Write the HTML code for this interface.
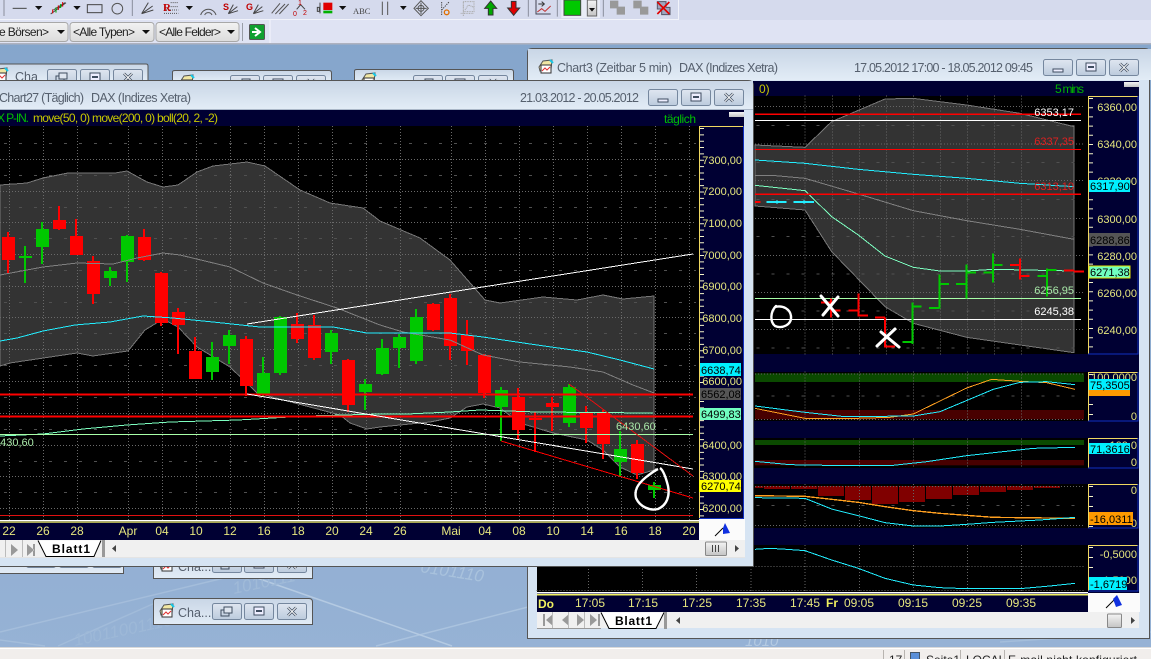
<!DOCTYPE html>
<html><head><meta charset="utf-8"><title>Chart</title>
<style>
html,body{margin:0;padding:0;background:#8aa9cd;width:1151px;height:659px;overflow:hidden}
svg{display:block}
text{font-family:"Liberation Sans",sans-serif;font-size:12px}
.ax{fill:#e6e67e;font-size:11px;text-anchor:end}
.tx{fill:#e6e67e;font-size:12px;text-anchor:middle}
.tag{fill:#000;font-size:11px}
.ttl{fill:#56606e;font-size:12.5px}
.cb{fill:#222;font-size:12px}
.tab{fill:#000;font-size:12px;font-weight:bold}
.st{fill:#222;font-size:12px}
.c{fill:none;shape-rendering:crispEdges}
</style></head><body>
<svg xmlns="http://www.w3.org/2000/svg" width="1151" height="659" viewBox="0 0 1151 659">
<defs>
<linearGradient id="dk" x1="0" y1="0" x2="0" y2="1"><stop offset="0" stop-color="#84a5cb"/><stop offset="1" stop-color="#96b2d5"/></linearGradient>
<linearGradient id="tg" x1="0" y1="0" x2="0" y2="1"><stop offset="0" stop-color="#c9d6e6"/><stop offset="1" stop-color="#e2ecf6"/></linearGradient>
<linearGradient id="bg" x1="0" y1="0" x2="0" y2="1"><stop offset="0" stop-color="#dfe6f0"/><stop offset="1" stop-color="#bccbdd"/></linearGradient>
<linearGradient id="cbg" x1="0" y1="0" x2="0" y2="1"><stop offset="0" stop-color="#f2f2f2"/><stop offset="1" stop-color="#dcdcdc"/></linearGradient>
<linearGradient id="wb" x1="0" y1="0" x2="0" y2="1"><stop offset="0" stop-color="#f4f4f4"/><stop offset="1" stop-color="#c4c4c4"/></linearGradient>
<g id="bRest"><rect x=".5" y=".5" width="29" height="16" rx="2" fill="url(#bg)" stroke="#75879e"/><rect x="9" y="7" width="8" height="6" fill="none" stroke="#3f4d60"/><rect x="12" y="4" width="8" height="6" fill="#dfe6f0" stroke="#3f4d60"/></g>
<g id="bMin"><rect x=".5" y=".5" width="29" height="16" rx="2" fill="url(#bg)" stroke="#75879e"/><rect x="10" y="10" width="10" height="3" fill="#eef" stroke="#3f4d60"/></g>
<g id="bMax"><rect x=".5" y=".5" width="29" height="16" rx="2" fill="url(#bg)" stroke="#75879e"/><rect x="10" y="4" width="10" height="8" fill="#eef" stroke="#3f4d60"/><rect x="12" y="7" width="6" height="2" fill="#3f4d60"/></g>
<g id="bX"><rect x=".5" y=".5" width="29" height="16" rx="2" fill="url(#bg)" stroke="#75879e"/><path d="M11 4.500L19 12.500M19 4.500L11 12.500" stroke="#3f4d60" stroke-width="2.600"/><path d="M11 4.500L19 12.500M19 4.500L11 12.500" stroke="#fff" stroke-width="1"/></g>
<g id="ico"><path d="M2 8L6 2L15 1L14 10L3 12z" fill="#f1e7a4" stroke="#555"/><rect x="4" y="6" width="10" height="8" fill="#fff" stroke="#333"/><path d="M5 12L8 9L10 11L13 8" stroke="#e03030" fill="none"/><path d="M13 1l3 3" stroke="#19c6e6" stroke-width="2"/></g>
</defs>

<!-- desktop -->
<rect width="1151" height="659" fill="url(#dk)"/>
<g fill="none" stroke="#b4cae2" stroke-width="1.500">
<path d="M257 578L452 646"/><path d="M376 646L528 607" opacity=".7"/><path d="M0 632L224 578" opacity=".5"/><path d="M58 646L155 603" opacity=".4"/><path d="M0 640L45 646" opacity=".5"/>
<path d="M1000 642L1151 632" opacity=".5"/>
</g>
<text x="420" y="572" transform="rotate(9 420 572)" style="font-size:17px;font-style:italic" fill="#a9c2dd">0101110</text>
<text x="234" y="594" transform="rotate(-12 234 594)" style="font-size:17px;font-style:italic" fill="#a0bad8">1010111</text>
<text x="75" y="646" transform="rotate(-12 75 646)" style="font-size:17px;font-style:italic" fill="#9db8d7">10011001110</text>
<text x="745" y="646" style="font-size:15px;font-style:italic" fill="#b4cae2">1010</text>

<!-- toolbars -->
<rect width="1151" height="20" fill="#d5daed"/>
<rect y="20" width="1151" height="23" fill="#dfe3f3"/>
<rect y="43" width="1151" height="1.500" fill="#aeb2bf"/>
<path d="M0 19.500H678.500V0" fill="none" stroke="#f1f3fa"/>
<g transform="scale(.33333)" stroke-width="3" fill="none">
<path d="M12 0V48M397 0V48" stroke="#8a8e9c"/>
<path d="M38 25H80" stroke="#444"/>
<path d="M105 18h22l-11 12zM220 18h22l-11 12zM557 18h22l-11 12zM1017 18h22l-11 12z" fill="#111"/>
<path d="M152 42L198 8M160 30l35-22" stroke="#444"/><path d="M158 28v12M175 16v14M188 6v14" stroke="#d00"/><path d="M168 22v16M182 12v12" stroke="#0a0"/>
<rect x="262" y="14" width="44" height="24" stroke="#444"/>
<circle cx="352" cy="26" r="16" stroke="#555"/>
<path d="M425 41L445 8M425 41L458 18M425 41L460 30" stroke="#444"/>
<path d="M512 8H535M512 20H535M492 30H535M492 40H535" stroke="#555" stroke-dasharray="3 3"/>
<path d="M602 45A24 24 0 0 1 648 45M614 45A12 12 0 0 1 636 45" stroke="#555"/>
<path d="M685 41L700 14M685 41L712 20M685 41L714 32" stroke="#444"/>
<path d="M760 41L775 14M760 41L787 20M760 41L790 32" stroke="#444"/>
<path d="M815 40L840 10M826 42L855 12M838 42L866 12" stroke="#555"/>
<path d="M890 28L902 14L915 28" stroke="#444"/>
<path d="M960 8V40M952 22h6v12h-6z" stroke="#444"/>
<rect x="970" y="8" width="27" height="22" fill="#e00000" stroke="none"/><rect x="970" y="32" width="27" height="8" fill="#00b000" stroke="none"/>
<path d="M1147 5V45M1163 5V45" stroke="#555"/>
</g>
<text x="163" y="11" style="font-family:'Liberation Serif',serif;font-size:11px;font-weight:bold" fill="#c00000">R</text>
<text x="223" y="10" style="font-size:9px;font-weight:bold" fill="#c00000">S</text>
<text x="246" y="10" style="font-size:9px;font-weight:bold" fill="#c00000">G</text>
<text x="298" y="5" style="font-size:7px" fill="#c00000">1</text>
<text x="293" y="16" style="font-size:7px" fill="#c00000">0</text>
<text x="303" y="15" style="font-size:7px" fill="#c00000">2</text>
<text x="353" y="14" style="font-family:'Liberation Serif',serif;font-size:8.500px" fill="#444">ABC</text>
<g transform="translate(400,0) scale(.33333)" stroke-width="3" fill="none">
<path d="M0 18h20l-10 12z" fill="#111"/>
<path d="M63 2L85 25L63 47L42 25z" stroke="#555"/><circle cx="63" cy="25" r="9" stroke="#555"/><path d="M63 8V42M47 25H80" stroke="#555"/>
<path d="M125 45V5M125 30L148 5" stroke="#444" stroke-dasharray="4 3"/><circle cx="140" cy="37" r="7" stroke="#e07000" stroke-width="4"/>
<path d="M190 5H222V35H190zM182 40H222M190 5V48M195 30L205 15L222 22" stroke="#aaa" stroke-dasharray="3 2"/>
<path d="M272 3L290 25H279V45H265V25H254z" fill="#00a800" stroke="#333"/>
<path d="M341 46L359 24H348V4H334V24H323z" fill="#e00000" stroke="#333"/>
<path d="M385 0V50M472 0V50M610 0V50" stroke="#8a8e9c"/>
<path d="M408 0V42H452" stroke="#445"/><path d="M412 36L425 26L435 34L452 18" stroke="#c03030"/><path d="M415 12H430M425 5L433 12L425 19" stroke="#333"/>
<rect x="484" y="0" width="116" height="54" fill="#e9ecf6"/>
<rect x="492" y="0" width="50" height="46" fill="#00c800" stroke="#444"/>
<rect x="562" y="0" width="28" height="48" fill="url(#wb)" stroke="#666"/><path d="M567 24h18l-9 11z" fill="#111"/>
<path d="M630 2H655V20H675V44H650V25H630z" fill="#999"/><path d="M700 2H725V20H745V44H720V25H700z" fill="#999"/>
<path d="M772 5H798V22H810V44H785V27H772z" fill="#9fa6c0" stroke="#556"/><path d="M772 6L808 42M808 6L772 42" stroke="#e00000" stroke-width="5"/>
</g>
<g>
<rect x="-6" y="22.500" width="74" height="19" rx="3" fill="url(#cbg)" stroke="#a8a8a8"/>
<text class="cb" x="-1" y="36" textLength="50">e Börsen&gt;</text><path d="M57 30h8l-4 4z" fill="#111"/>
<rect x="70" y="22.500" width="84" height="19" rx="3" fill="url(#cbg)" stroke="#a8a8a8"/>
<text class="cb" x="73" y="36" textLength="62">&lt;Alle Typen&gt;</text><path d="M142 30h8l-4 4z" fill="#111"/>
<rect x="156" y="22.500" width="83" height="19" rx="3" fill="url(#cbg)" stroke="#a8a8a8"/>
<text class="cb" x="159" y="36" textLength="62">&lt;Alle Felder&gt;</text><path d="M227 30h8l-4 4z" fill="#111"/>
<path d="M242.500 23V41" stroke="#9a9ea8"/>
<rect x="249.500" y="24.500" width="15" height="15" rx="1" fill="#10a030" stroke="#555"/>
<path d="M252 32H258M255 28L260 32L255 36" stroke="#fff" stroke-width="2" fill="none"/>
<path d="M270 20V43" stroke="#f5f6fc"/>
</g>

<!-- minimized windows -->
<g>
<path d="M-3 81V66Q-3 64 -1 64H146Q148 64 148 66V81z" fill="url(#tg)" stroke="#555"/>
<use href="#ico" x="-8" y="67"/>
<text class="ttl" x="15" y="81">Cha</text>
<use href="#bRest" x="47" y="69"/><use href="#bMax" x="80" y="69"/><use href="#bX" x="113" y="69"/>
<path d="M172.500 81V72Q172.500 70.500 175 70.500H329Q331.500 70.500 331.500 73V81z" fill="url(#tg)" stroke="#555"/>
<use href="#ico" x="178" y="74"/>
<use href="#bRest" x="230" y="75"/><use href="#bMax" x="263" y="75"/><use href="#bX" x="296" y="75"/>
<path d="M354.500 81V71Q354.500 69.500 357 69.500H511Q513.500 69.500 513.500 72V81z" fill="url(#tg)" stroke="#555"/>
<use href="#ico" x="360" y="72"/>
<use href="#bRest" x="413" y="75"/><use href="#bMax" x="445" y="75"/><use href="#bX" x="478" y="75"/>
<path d="M-3 550V573.500H123.500V550z" fill="url(#tg)" stroke="#555"/>
<use href="#bRest" x="26" y="551"/><use href="#bMax" x="59" y="551"/><use href="#bX" x="92" y="551"/>
<path d="M153.500 550V578.500H312.500V550z" fill="url(#tg)" stroke="#555"/>
<use href="#ico" x="158" y="557"/>
<text class="ttl" x="178" y="571">Cha...</text>
<use href="#bRest" x="212" y="556"/><use href="#bMax" x="244" y="556"/><use href="#bX" x="277" y="556"/>
<path d="M153.500 601Q153.500 598.500 156 598.500H309Q312.500 598.500 312.500 602V624.500H153.500z" fill="url(#tg)" stroke="#555"/>
<use href="#ico" x="158" y="603"/>
<text class="ttl" x="178" y="617">Cha...</text>
<use href="#bRest" x="212" y="603"/><use href="#bMax" x="244" y="603"/><use href="#bX" x="277" y="603"/>
</g>

<!-- Chart3 window -->
<path d="M527.500 638.500V53Q527.500 48.500 532 48.500H1145Q1149.500 48.500 1149.500 53V638.500z" fill="#d6e4f3" stroke="#555"/>
<rect x="528" y="49" width="1121" height="31" fill="url(#tg)"/>
<use href="#ico" x="537" y="59"/>
<text class="ttl" x="557" y="72" textLength="115">Chart3 (Zeitbar 5 min)</text>
<text class="ttl" x="679" y="72" textLength="99">DAX (Indizes Xetra)</text>
<text class="ttl" x="854" y="72" textLength="179">17.05.2012 17:00 - 18.05.2012 09:45</text>
<use href="#bMin" x="1043" y="59"/><use href="#bMax" x="1076" y="59"/><use href="#bX" x="1109" y="59"/>
<rect x="537" y="81" width="602" height="531" fill="#000033"/>
<rect x="537" y="96" width="551" height="258" fill="#000"/>
<rect x="537" y="372" width="551" height="49" fill="#000"/>
<rect x="537" y="438" width="551" height="30" fill="#000"/>
<rect x="537" y="484" width="551" height="44" fill="#000"/>
<rect x="537" y="545" width="551" height="48" fill="#000"/>
<text x="759" y="93" style="font-size:12px" fill="#c8c800">0)</text>
<text x="1055" y="93" fill="#00b000" textLength="29">5 mins</text>
<rect x="1124" y="82" width="15" height="5" fill="url(#wb)"/>

<!-- chart3 price panel -->
<g transform="translate(750,50) scale(.33333)" stroke-width="3">
<path class="c" d="M15 285L165 292L245 215L405 147L490 145L650 165L810 190L972 230V908L810 885L650 862L490 820L405 770L245 605L165 480L15 468z" style="fill:#333" stroke="#777"/>
<path class="c" stroke="#666" stroke-dasharray="3 6" d="M165 137V915M247 137V915M328 137V915M409 137V915M490 137V915M571 137V915M652 137V915M733 137V915M814 137V915"/>
<path class="c" stroke="#666" stroke-dasharray="3 6" d="M15 170H1003M15 282H1003M15 392H1003M15 505H1003M15 616H1003M15 727H1003M15 838H1003"/>
<path class="c" stroke="#505050" stroke-dasharray="9 36" d="M20 226H1003M20 338H1003M20 449H1003M20 560H1003M20 672H1003M20 783H1003M20 894H1003"/>
<path class="c" d="M15 376L65 376L165 385L325 432L490 482L650 512L810 538L972 568" stroke="#808080"/>
<path class="c" d="M15 330L165 340L325 358L490 373L650 385L810 400L972 410" stroke="#22eeff"/>
<path class="c" d="M15 406L165 422L245 500L325 555L405 618L490 652L570 663L650 663L730 658L972 663" stroke="#7dffc0"/>
<path class="c" d="M15 193H993" stroke="#f00" stroke-width="4"/>
<path class="c" d="M15 211H993" stroke="#fff" stroke-width="3"/>
<path class="c" d="M15 298H993" stroke="#f00" stroke-width="3"/>
<path class="c" d="M15 433H993" stroke="#f00" stroke-width="4"/>
<path class="c" d="M15 745H993" stroke="#a8ffa8" stroke-width="3"/>
<path class="c" d="M15 808H993" stroke="#fff" stroke-width="3"/>
<path class="c" d="M15 456H32" stroke="#f00" stroke-width="5"/>
<path class="c" d="M50 456H110M130 456H192" stroke="#22eeff" stroke-width="5"/>
<path class="c" d="M81 450V462M162 450V462" stroke="#22eeff" stroke-width="3"/>
<path class="c" stroke="#f00" stroke-width="6" d="M243 745V802M213 757H243M243 782H272M325 730V800M295 782H325M325 797H354M405 803V893M375 803H405M405 890H435M810 625V688M780 645H810M810 678H838M942 662H972M972 665H1002"/>
<path class="c" stroke="#00c800" stroke-width="6" d="M487 757V882M457 876H487M487 770H515M568 673V775M537 774H568M568 702H597M649 643V745M618 702H649M649 668H678M729 610V697M700 668H729M729 645H758M891 655V740M862 678H891M891 660H920"/>
</g>
<!-- scribbles -->
<g fill="none" stroke="#fff" stroke-linecap="round" stroke-linejoin="round">
<path d="M776 306C770 312 770 322 775 326C782 329 792 325 791 316C790 309 783 305 775 307" stroke-width="2.400"/>
<path d="M821 296L838 316M838 297L823 315" stroke-width="3"/>
<path d="M877 346L895 329M881 332L899 347" stroke-width="3"/>
</g>
<g fill="#fff" style="font-size:11px"><text x="1074" y="116" text-anchor="end" style="font-size:11px">6353,17</text><text x="1074" y="315" text-anchor="end" style="font-size:11px">6245,38</text></g>
<text x="1074" y="145" text-anchor="end" fill="#e02020" style="font-size:11px">6337,35</text>
<text x="1074" y="190" text-anchor="end" fill="#e02020" style="font-size:11px">6313,10</text>
<text x="1074" y="294" text-anchor="end" fill="#a8e8a8" style="font-size:11px">6256,95</text>

<!-- chart3 axis -->
<path d="M1088.500 354V96.500H1138" fill="none" stroke="#f0d860"/>
<path d="M1088 354H1138V96" fill="none" stroke="#1030c0"/>
<path d="M1091 98V354" stroke="#f4f4c8" stroke-width="4" stroke-dasharray="1 8.200"/>
<text class="ax" x="1137" y="111">6360,00</text><text class="ax" x="1137" y="148">6340,00</text><text class="ax" x="1137" y="185">6320,00</text><text class="ax" x="1137" y="223">6300,00</text><text class="ax" x="1137" y="260">6280,00</text><text class="ax" x="1137" y="297">6260,00</text><text class="ax" x="1137" y="334">6240,00</text>
<rect x="1089" y="180" width="41" height="12" fill="#00f0ff"/><text class="tag" x="1090" y="190">6317,90</text>
<rect x="1089" y="233" width="41" height="13" fill="#555"/><text class="tag" x="1090" y="244">6288,86</text>
<rect x="1089" y="266" width="41" height="12" fill="#70ffc0" stroke="#e8e000"/><text class="tag" x="1090" y="276">6271,38</text>

<!-- sub panels -->
<g transform="translate(750,360) scale(.33333)" stroke-width="3">
<rect x="15" y="40" width="987" height="26" fill="#0b4a00"/>
<rect x="15" y="150" width="987" height="28" fill="#480000"/>
<path class="c" stroke="#666" stroke-dasharray="3 6" d="M15 178H1003M15 42H1003M165 35V185M328 35V185M490 35V185M652 35V185M814 35V185"/>
<path class="c" stroke="#505050" stroke-dasharray="9 36" d="M20 108H1003"/>
<path class="c" stroke="#ffa020" d="M15 145L165 175L285 176L420 172L490 162L650 84L725 58L810 64L890 68L975 88"/>
<path class="c" stroke="#22eeff" d="M15 138L165 157L285 170L490 168L570 155L730 88L810 67L890 65L975 74"/>
<rect x="15" y="240" width="987" height="15" fill="#0b4a00"/>
<rect x="15" y="300" width="987" height="16" fill="#480000"/>
<path class="c" stroke="#666" stroke-dasharray="3 6" d="M165 235V325M328 235V325M490 235V325M652 235V325M814 235V325"/>
<path class="c" stroke="#22eeff" d="M15 304L120 314L285 317L430 316L530 305L650 287L850 265L975 262"/>
<path fill="#800000" d="M15 378H40V384H15zM42 378H120V387H42zM123 378H202V387H123zM204 378H282V408H204zM285 378H363V420H285zM366 378H444V432H366zM447 378H525V426H447zM528 378H606V417H528zM609 378H687V405H609zM690 378H768V396H690zM771 378H849V390H771zM852 378H930V384H852z"/>
<path class="c" stroke="#666" stroke-dasharray="3 6" d="M15 380H1003M15 496H1003M165 372V505M328 372V505M490 372V505M652 372V505M814 372V505"/>
<path class="c" stroke="#505050" stroke-dasharray="9 36" d="M20 436H1003"/>
<path class="c" stroke="#ffa020" stroke-width="4" d="M15 407L165 409L245 418L325 427L405 440L490 452L570 460L650 466L730 472L975 475"/>
<path class="c" stroke="#22eeff" d="M15 413L165 415L245 447L325 467L405 488L490 498L570 498L650 493L730 487L870 480L975 472"/>
<path class="c" stroke="#666" stroke-dasharray="3 6" d="M-640 620H1003M-640 692H1003M165 555V695M328 555V695M490 555V695M652 555V695M814 555V695M-484 555V695M-322 555V695M-160 555V695M3 555V695"/>
<path class="c" stroke="#22eeff" d="M15 568L60 565L110 568L165 572L245 600L325 625L405 655L490 675L570 683L650 686L810 686L900 678L975 670"/>
</g>
<g fill="none">
<path d="M1088.500 421V372.500H1138M1088.500 468V438.500H1138M1088.500 528V484.500H1138M1088.500 591V545.500H1138" stroke="#f0d860"/>
<path d="M1088 421H1138V372M1088 468H1138V438M1088 528H1138V484M1088 591H1138V545" stroke="#1030c0"/>
<path d="M1091 374V421M1091 486V528M1091 547V591" stroke="#f4f4c8" stroke-width="4" stroke-dasharray="1 9"/>
</g>
<text class="ax" x="1137" y="381">100,0000</text>
<rect x="1089" y="390" width="41" height="6" fill="#ff9900"/>
<rect x="1089" y="379" width="41" height="11" fill="#00f0ff"/><text class="tag" x="1090" y="389">75,3505</text>
<text class="ax" x="1137" y="420">0</text>
<text class="ax" x="1137" y="449">100,0</text>
<rect x="1089" y="443" width="41" height="11" fill="#00f0ff"/><text class="tag" x="1090" y="453">71,3616</text>
<text class="ax" x="1137" y="466">0</text>
<text class="ax" x="1137" y="494">0</text>
<text class="ax" x="1137" y="527">0</text>
<rect x="1089" y="512" width="44" height="13" fill="#ff9900"/><text class="tag" x="1090" y="523">-16,0311</text>
<text class="ax" x="1137" y="558">-0,5000</text>
<text class="ax" x="1137" y="584">-1,5000</text>
<rect x="1089" y="577" width="38" height="13" fill="#00f0ff"/><text class="tag" x="1090" y="588">-1,6719</text>

<!-- chart3 time axis -->
<rect x="537" y="592" width="551" height="1.500" fill="#fff"/>
<rect x="537" y="594" width="551" height="1.500" fill="#f0f060"/>
<rect x="537" y="595.500" width="551" height="16" fill="#000033"/>
<text x="538" y="608" style="font-size:12px;font-weight:bold" fill="#f0f060">Do</text>
<text class="tx" x="590" y="607">17:05</text><text class="tx" x="643" y="607">17:15</text><text class="tx" x="697" y="607">17:25</text><text class="tx" x="751" y="607">17:35</text><text class="tx" x="805" y="607">17:45</text>
<text x="826" y="607" style="font-size:12px;font-weight:bold" fill="#f0f060">Fr</text>
<text class="tx" x="859" y="607">09:05</text><text class="tx" x="913" y="607">09:15</text><text class="tx" x="967" y="607">09:25</text><text class="tx" x="1021" y="607">09:35</text>
<rect x="1088" y="593" width="52" height="19" fill="#fbfbfb"/>
<path d="M1106 608L1115 599" stroke="#000"/><path d="M1113 599L1117 595L1122 605L1116 607z" fill="#1030e0"/>
<!-- chart3 tabs -->
<rect x="537" y="612" width="602" height="16" fill="#f0f0f0"/>
<path d="M537 628.500H601" stroke="#999"/>
<g fill="#999"><path d="M545 614V626H543V614zM553 614V626L546 620zM569 614V626L562 620zM577 614V626L584 620z"/><path d="M600 614V626H598V614zM590 614V626L597 620z"/></g>
<path d="M552.500 612V628M568.500 612V628M584.500 612V628" stroke="#bbb"/>
<path d="M601 612.500L609 628.500H656L664 612.500z" fill="#fff"/><path d="M601 612.500L609 628.500H656L664 612.500" fill="none" stroke="#000"/>
<text class="tab" x="615" y="625" textLength="37">Blatt1</text>
<rect x="664" y="612" width="3" height="17" fill="#999"/>
<path d="M680 617v7l-4-3.500z" fill="#444"/>
<rect x="1107.500" y="614" width="14" height="13.500" rx="1" fill="url(#wb)" stroke="#888"/>
<path d="M1131 617v7l4-3.500z" fill="#444"/>

<!-- MAIN WINDOW -->
<path d="M-3 566.500V80.500H748Q753.500 80.500 753.500 86V566.500z" fill="#d6e4f3" stroke="#555"/>
<rect x="0" y="81" width="753" height="28" fill="url(#tg)"/>
<path d="M0 109.500H753" stroke="#aab7c8"/>
<text class="ttl" x="-1" y="102" textLength="85">Chart27 (Täglich)</text>
<text class="ttl" x="91" y="102" textLength="100">DAX (Indizes Xetra)</text>
<text class="ttl" x="520" y="102" textLength="119">21.03.2012 - 20.05.2012</text>
<use href="#bMin" x="648" y="89"/><use href="#bMax" x="681" y="89"/><use href="#bX" x="714" y="89"/>
<rect x="0" y="110" width="744" height="430" fill="#000033"/>
<rect x="0" y="126" width="699" height="395" fill="#000"/>
<text x="-3" y="122" style="font-size:12px" fill="#00c000" textLength="32">X P-IN.</text>
<text x="33" y="122" style="font-size:12px" fill="#c8c800" textLength="185">move(50, 0) move(200, 0) boll(20, 2, -2)</text>
<text x="664" y="123" fill="#00c000" textLength="32">täglich</text>
<rect x="729" y="112" width="15" height="5" fill="url(#wb)"/>

<!-- band -->
<path class="c" style="fill:#333" stroke="#777" d="M0 185L27 183L43 178L68 173L115 173L127 171L147 182L163 187L178 185L197 172L213 166L247 162L265 166L300 190L330 203L363 208L380 221L420 238L450 260L485 300L500 303L543 297L577 300L603 295L623 299L654 296V470L637 475L620 467L603 450L587 440L553 433L520 423L500 408L483 404L467 407L450 418L430 422L400 425L380 427L367 429L350 423L340 415L257 393L230 367L197 347L178 327L163 319L145 330L128 351L93 356L77 353L10 363L0 366z"/>
<!-- grid -->
<path class="c" stroke="#6a6a6a" stroke-dasharray="1 2" d="M9.500 126V521M43.500 126V521M77.500 126V521M128.500 126V521M162.500 126V521M196.500 126V521M230.500 126V521M264.500 126V521M298.500 126V521M332.500 126V521M366.500 126V521M400.500 126V521M451.500 126V521M485.500 126V521M519.500 126V521M553.500 126V521M587.500 126V521M621.500 126V521M655.500 126V521M689.500 126V521"/>
<path class="c" stroke="#6a6a6a" stroke-dasharray="1 2" d="M0 159.500H696M0 191.500H696M0 222.500H696M0 254.500H696M0 286.500H696M0 317.500H696M0 349.500H696M0 381.500H696M0 413.500H696M0 445.500H696M0 476.500H696M0 508.500H696"/>
<path class="c" stroke="#505050" stroke-dasharray="3 12" d="M4 143.500H696M4 175.500H696M4 207.500H696M4 238.500H696M4 270.500H696M4 302.500H696M4 333.500H696M4 365.500H696M4 397.500H696M4 429.500H696M4 461.500H696M4 492.500H696"/>
<!-- candles -->
<path fill="none" stroke="#f00" stroke-width="2" d="M8 232V274M59 206V230M76 219V255M93 256V304M144 229V261M161 272V326M178 308V354M195 337V379M246 336V396M297 313V343M314 315V360M348 359V412M433 303V331M450 294V360M467 320V365M484 354V398M518 388V440M535 412V452M552 397V431M586 406V443M603 410V459M637 440V479"/>
<path fill="#f00" d="M2 237H15V260H2zM53 220H66V229H53zM70 236H83V255H70zM87 261H100V294H87zM138 237H151V260H138zM155 273H168V323H155zM172 312H185V325H172zM189 351H202V379H189zM240 339H253V386H240zM291 324H304V339H291zM308 325H321V358H308zM342 360H355V405H342zM427 304H440V330H427zM444 298H457V346H444zM461 335H474V351H461zM478 355H491V393H478zM512 397H525V430H512zM529 418H542V420H529zM546 403H559V407H546zM580 413H593V428H580zM597 412H610V444H597zM631 444H644V473H631z"/>
<path fill="none" stroke="#00c800" stroke-width="2" d="M25 246V283M42 222V264M110 267V286M127 235V282M212 342V380M229 330V364M263 357V397M280 316V375M331 330V364M365 379V410M382 339V375M399 334V368M416 309V364M501 387V441M569 384V427M620 431V477M654 482V498"/>
<path fill="#00c800" d="M19 256H32V258H19zM36 229H49V247H36zM104 271H117V278H104zM121 236H134V262H121zM206 357H219V372H206zM223 335H236V346H223zM257 373H270V394H257zM274 317H287V373H274zM325 333H338V352H325zM359 384H372V392H359zM376 348H389V374H376zM393 337H406V348H393zM410 317H423V361H410zM495 390H508V407H495zM563 387H576V423H563zM614 449H627V462H614zM648 485H661V490H648z"/>
<!-- indicators -->
<path class="c" stroke="#808080" d="M0 275L43 267L77 263L113 264L137 258L163 253L180 255L230 267L263 283L297 295L337 308L380 325L403 332L450 340L483 355L520 362L570 367L603 372L633 385L654 393"/>
<path class="c" stroke="#22eeff" d="M0 341L17 338L43 331L75 325L110 322L143 316L173 318L213 322L260 327L333 327L367 333L450 333L483 337L537 345L587 352L620 360L654 369"/>
<path class="c" stroke="#7dffc0" d="M0 436L43 434L83 429L127 425L170 422L238 420L307 416L380 414L407 414L450 412L480 410L537 412L653 413"/>
<!-- horizontals -->
<path class="c" stroke="#f00" stroke-width="2" d="M0 394.500H693"/>
<path class="c" stroke="#f00" stroke-width="2" d="M0 416.500H693"/>
<path class="c" stroke="#a8ffa8" d="M0 434.500H693"/>
<path class="c" stroke="#e01010" d="M0 515.500H693"/>
<!-- trend -->
<path class="c" stroke="#fff" d="M247 324L693 254"/>
<path class="c" stroke="#fff" d="M247 394L693 469"/>
<path class="c" stroke="#f00" d="M501 441L693 498"/>
<path class="c" stroke="#e01010" d="M569 384L693 476"/>
<text x="616" y="430" style="font-size:11px" fill="#a8e8a8">6430,60</text>
<text x="-6" y="446" style="font-size:11px" fill="#a8e8a8">6430,60</text>
<path d="M660 468C663 470 666 478 668 486C670 496 667 505 658 509C650 511 640 507 636 498C634 490 638 484 645 478C650 474 654 471 658 469" fill="none" stroke="#fff" stroke-width="2.400"/>

<!-- main axis -->
<path d="M699.500 521V126.500H744" fill="none" stroke="#f0d860"/>
<path d="M699 518.500H743.500V126" fill="none" stroke="#1030c0"/>
<path d="M702 128V518" stroke="#f4f4c8" stroke-width="4" stroke-dasharray="1 5.350"/>
<text class="ax" x="742" y="164">7300,00</text><text class="ax" x="742" y="195">7200,00</text><text class="ax" x="742" y="227">7100,00</text><text class="ax" x="742" y="259">7000,00</text><text class="ax" x="742" y="290">6900,00</text><text class="ax" x="742" y="322">6800,00</text><text class="ax" x="742" y="354">6700,00</text><text class="ax" x="742" y="385">6600,00</text><text class="ax" x="742" y="449">6400,00</text><text class="ax" x="742" y="480">6300,00</text><text class="ax" x="742" y="512">6200,00</text>
<rect x="700" y="363" width="41" height="13" fill="#00f0ff"/><text class="tag" x="701" y="374">6638,74</text>
<rect x="700" y="388" width="41" height="12" fill="#555"/><text class="tag" x="701" y="398">6562,08</text>
<rect x="700" y="408" width="41" height="12" fill="#70ffc0"/><text class="tag" x="701" y="418">6499,83</text>
<rect x="699" y="480" width="42" height="12" fill="#ffff00"/><text class="tag" x="701" y="490">6270,74</text>

<!-- main x-axis -->
<rect x="0" y="520" width="699" height="1.200" fill="#fff"/>
<rect x="0" y="521.500" width="699" height="1.200" fill="#f0f060"/>
<rect x="0" y="523" width="699" height="17" fill="#000033"/>
<text class="tx" x="9" y="535">22</text><text class="tx" x="43" y="535">26</text><text class="tx" x="77" y="535">28</text><text class="tx" x="128" y="535">Apr</text><text class="tx" x="162" y="535">04</text><text class="tx" x="196" y="535">10</text><text class="tx" x="230" y="535">12</text><text class="tx" x="264" y="535">16</text><text class="tx" x="298" y="535">18</text><text class="tx" x="332" y="535">20</text><text class="tx" x="366" y="535">24</text><text class="tx" x="400" y="535">26</text><text class="tx" x="451" y="535">Mai</text><text class="tx" x="485" y="535">04</text><text class="tx" x="519" y="535">08</text><text class="tx" x="553" y="535">10</text><text class="tx" x="587" y="535">14</text><text class="tx" x="621" y="535">16</text><text class="tx" x="655" y="535">18</text><text class="tx" x="689" y="535">20</text>
<rect x="699" y="519" width="46" height="21" fill="#fbfbfb"/>
<path d="M715 536L723 528" stroke="#000"/><path d="M723 528L725 523L730 533L723 534z" fill="#1030e0"/>
<!-- main tabs -->
<rect x="0" y="540" width="745" height="17" fill="#f0f0f0"/>
<path d="M0 557.500H745" stroke="#e4e4e4"/>
<g fill="#999"><path d="M11 544V556L18 550zM27 544V556L34 550zM35 544V556H33V544z"/></g>
<path d="M5.500 540V557M22.500 540V557" stroke="#bbb"/>
<path d="M38 540.500L46 556.500H94L101 540.500z" fill="#fff"/><path d="M38 540.500L46 556.500H94L101 540.500" fill="none" stroke="#000"/>
<text class="tab" x="52" y="553" textLength="38">Blatt1</text>
<rect x="102" y="540" width="3" height="17" fill="#999"/>
<path d="M116 545v7l-4-3.500z" fill="#444"/>
<rect x="705.500" y="542" width="21" height="13.500" rx="1" fill="url(#wb)" stroke="#888"/>
<path d="M712.500 545V552M715.500 545V552M718.500 545V552" stroke="#444"/>
<path d="M735 545v7l4-3.500z" fill="#444"/>

<!-- status bar -->
<rect x="0" y="647" width="1151" height="12" fill="#f1eeec"/>
<path d="M0 647.500H1151" stroke="#d8d8d8"/><path d="M0 648.500H1151" stroke="#fff"/>
<path d="M883.500 650V659M904.500 650V659M960.500 650V659M1004.500 650V659" stroke="#b8b4b0"/>
<text class="st" x="889" y="664">17</text>
<rect x="910.500" y="652.500" width="9" height="8" fill="#5a8fd8" stroke="#456"/>
<text class="st" x="926" y="664">Seite1</text>
<text class="st" x="966" y="664">LOCAL</text>
<text class="st" x="1008" y="664" textLength="129">E-mail nicht konfiguriert</text>
</svg>
</body></html>
